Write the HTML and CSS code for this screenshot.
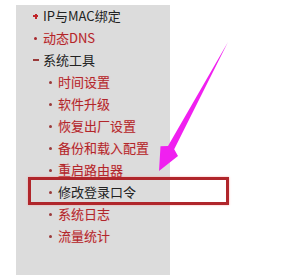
FILE: index.html
```html
<!DOCTYPE html>
<html>
<head>
<meta charset="utf-8">
<link rel="stylesheet" href="styles.css">
</head>
<body>
<div class="page">
  <div class="panel">
    <ul class="menu">
      <li class="item top plus dark">IP与MAC绑定</li>
      <li class="item sub red">动态DNS</li>
      <li class="item top minus dark">系统工具</li>
      <li class="item sub2 red">时间设置</li>
      <li class="item sub2 red">软件升级</li>
      <li class="item sub2 red">恢复出厂设置</li>
      <li class="item sub2 red">备份和载入配置</li>
      <li class="item sub2 red">重启路由器</li>
      <li class="item sub2 dark">修改登录口令</li>
      <li class="item sub2 red">系统日志</li>
      <li class="item sub2 red">流量统计</li>
    </ul>
  </div>
  <div class="highlight"></div>
  <svg class="arrow" width="290" height="275" viewBox="0 0 290 275">
    <polygon points="228,42 174.2,149.3 178,156 159,171 160.5,146.3 168,145.9" fill="#f020f0"/>
  </svg>
</div>
</body>
</html>
```
FILE: styles.css
```css
html, body {
  margin: 0;
  padding: 0;
  background: #ffffff;
}
.page {
  position: relative;
  width: 290px;
  height: 275px;
  overflow: hidden;
}
.panel {
  margin-left: 16px;
  margin-top: 5px;
  width: 154px;
  height: 270px;
  background: #dcdcdc;
}
.menu {
  list-style: none;
  margin: 0;
  padding: 0;
  font-family: "Noto Sans CJK SC", "Noto Sans", sans-serif;
  font-size: 13px;
}
.item {
  position: relative;
  height: 22px;
  line-height: 22px;
  white-space: nowrap;
}
.top { padding-left: 27px; }
.sub { padding-left: 27px; }
.sub2 { padding-left: 42px; }
.dark { color: #222222; }
.red { color: #b0262b; text-shadow: 0 0 1px rgba(255, 160, 160, 0.6); }
.item::before {
  content: "";
  position: absolute;
  background: #a8282d;
}
.plus::before {
  left: 17px;
  top: 10px;
  width: 5px;
  height: 2px;
  background: #c0262b;
}
.plus::after {
  content: "";
  position: absolute;
  left: 18.5px;
  top: 8.5px;
  width: 2px;
  height: 5px;
  background: #c0262b;
}
.minus::before {
  left: 17px;
  top: 10px;
  width: 6px;
  height: 2px;
  background: #9a3a3a;
}
.sub::before {
  left: 18px;
  top: 10px;
  width: 3px;
  height: 3px;
  border-radius: 50%;
}
.sub2::before {
  left: 33px;
  top: 10px;
  width: 3px;
  height: 3px;
  border-radius: 50%;
  background: #9a3a3a;
}
.highlight {
  position: absolute;
  left: 28px;
  top: 177px;
  width: 195px;
  height: 22px;
  border: 3px solid #b0262b;
  box-shadow: 0 0 2px rgba(255, 140, 140, 0.7);
}
.arrow {
  position: absolute;
  left: 0;
  top: 0;
}
```
